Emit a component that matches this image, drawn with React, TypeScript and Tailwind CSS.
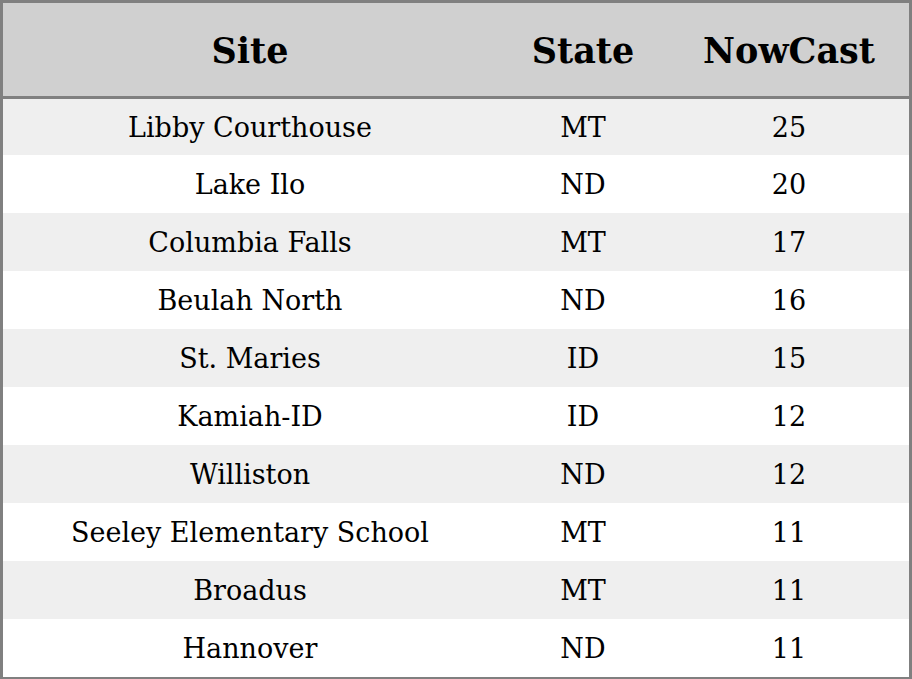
const rows = [
  ['Libby Courthouse', 'MT', '25'],
  ['Lake Ilo', 'ND', '20'],
  ['Columbia Falls', 'MT', '17'],
  ['Beulah North', 'ND', '16'],
  ['St. Maries', 'ID', '15'],
  ['Kamiah-ID', 'ID', '12'],
  ['Williston', 'ND', '12'],
  ['Seeley Elementary School', 'MT', '11'],
  ['Broadus', 'MT', '11'],
  ['Hannover', 'ND', '11'],
];

export default function App() {
  return (
    <div className="w-[912px] h-[679px] overflow-hidden bg-white font-['DejaVu_Serif',serif] text-black">
      <div className="border-[3px] border-[#808080]">
        <div className="grid grid-cols-[494px_172px_240px] h-[96px] pt-[4px] items-center bg-[#d0d0d0] border-b-[3px] border-[#808080] text-[35px] font-bold text-center">
          <div>Site</div>
          <div>State</div>
          <div>NowCast</div>
        </div>
        {rows.map((r, i) => (
          <div
            key={i}
            className={`grid grid-cols-[494px_172px_240px] items-center text-center text-[27px] pt-[3px] ${i === 0 ? 'h-[56px]' : 'h-[58px]'} ${i % 2 === 0 ? 'bg-[#efefef]' : 'bg-white'}`}
          >
            <div>{r[0]}</div>
            <div>{r[1]}</div>
            <div>{r[2]}</div>
          </div>
        ))}
      </div>
    </div>
  );
}
